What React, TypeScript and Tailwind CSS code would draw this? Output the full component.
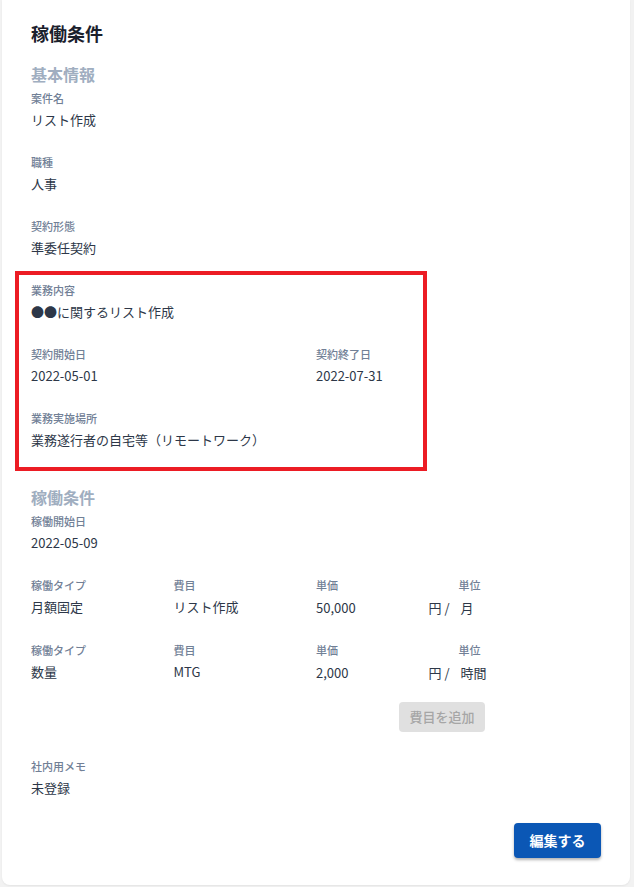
import React from "react";

const font = { fontFamily: '"Noto Sans CJK JP", "Noto Sans", sans-serif' };

function Field({ label, value, className = "" }: { label: string; value: string; className?: string }) {
  return (
    <div className={className}>
      <div className="h-4 text-[11px] leading-4 font-medium text-[#718096]">{label}</div>
      <div className="mt-[3px] h-[21px] text-[13px] leading-[21px] text-[#2d3748]">{value}</div>
    </div>
  );
}

function Row({ type, item, price, unit, className = "" }: { type: string; item: string; price: string; unit: string; className?: string }) {
  return (
    <div className={"grid grid-cols-4 " + className}>
      <Field label="稼働タイプ" value={type} />
      <Field label="費目" value={item} />
      <div>
        <div className="h-4 text-[11px] leading-4 font-medium text-[#718096]">単価</div>
        <div className="mt-[4px] flex h-[21px] justify-between pr-[9px] text-[13px] leading-[21px] text-[#2d3748]">
          <span>{price}</span>
          <span>円 /</span>
        </div>
      </div>
      <div>
        <div className="h-4 text-[11px] leading-4 font-medium text-[#718096]">単位</div>
        <div className="mt-[4px] h-[21px] pl-[2px] text-[13px] leading-[21px] text-[#2d3748]">{unit}</div>
      </div>
    </div>
  );
}

export default function App() {
  return (
    <div className="min-h-[887px] w-[634px] bg-[#f2f2f2]" style={font}>
      <div className="ml-[2px] w-[628px] rounded-b-lg bg-white pt-5 pb-[27px] pl-[29px] pr-[29px] shadow-[0_1px_2px_rgba(0,0,0,0.06)]">
        <h1 className="text-[18px] font-bold leading-[27px] text-[#1a202c]">稼働条件</h1>
        <h2 className="mt-[14px] text-[16px] font-bold leading-[26px] text-[#a0aec0]">基本情報</h2>
        <Field className="mt-[3px]" label="案件名" value="リスト作成" />
        <Field className="mt-[24px]" label="職種" value="人事" />
        <Field className="mt-[24px]" label="契約形態" value="準委任契約" />
        <div className="relative mt-[24px]">
          <div className="pointer-events-none absolute top-[-11px] left-[-16px] h-[200px] w-[412px] border-[4px] border-[#ec1c24]" />
          <Field label="業務内容" value="●●に関するリスト作成" />
          <div className="mt-[24px] grid grid-cols-2">
            <Field label="契約開始日" value="2022-05-01" />
            <Field label="契約終了日" value="2022-07-31" />
          </div>
          <Field className="mt-[24px]" label="業務実施場所" value="業務遂行者の自宅等（リモートワーク）" />
        </div>
        <h2 className="mt-[34px] text-[16px] font-bold leading-[26px] text-[#a0aec0]">稼働条件</h2>
        <Field className="mt-[3px]" label="稼働開始日" value="2022-05-09" />
        <Row className="mt-[24px]" type="月額固定" item="リスト作成" price="50,000" unit="月" />
        <Row className="mt-[24px]" type="数量" item="MTG" price="2,000" unit="時間" />
        <div className="mt-[19px] pl-[368px]">
          <button className="h-[30px] w-[86px] rounded bg-[#e0e0e0] text-[13px] font-medium text-[#a6a6a6]">費目を追加</button>
        </div>
        <Field className="mt-[26px]" label="社内用メモ" value="未登録" />
        <div className="mt-[25px] flex justify-end">
          <button className="h-[35px] w-[87px] rounded bg-[#0b57b5] text-[14px] font-bold text-white shadow-[0_2px_3px_rgba(0,0,0,0.3)]">編集する</button>
        </div>
      </div>
    </div>
  );
}
